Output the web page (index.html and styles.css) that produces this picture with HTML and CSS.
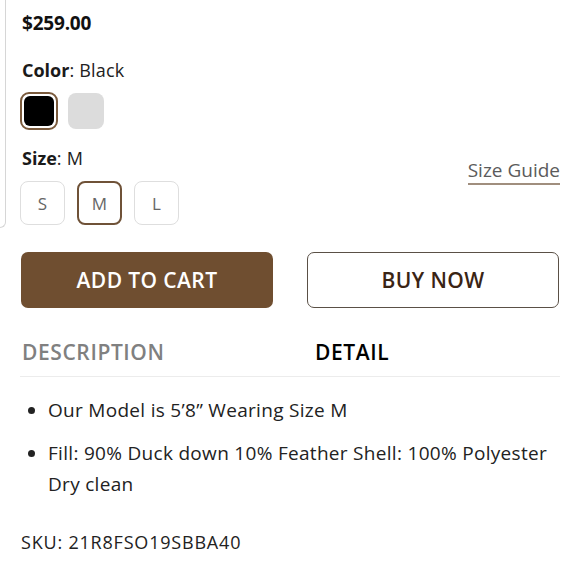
FILE: index.html
```html
<!DOCTYPE html>
<html lang="en">
<head>
<meta charset="utf-8">
<title>Product</title>
<link rel="stylesheet" href="styles.css">
</head>
<body>
<div class="top">
  <div class="rail"></div>
  <div class="details">
    <div class="price">$259.00</div>
    <div class="label"><strong>Color</strong>: Black</div>
    <div class="swatches">
      <span class="swatch swatch-black selected"><span class="fill"></span></span>
      <span class="swatch swatch-grey"></span>
    </div>
    <div class="size-row">
      <div class="size-col">
        <div class="label label-size"><strong>Size</strong>: M</div>
        <div class="sizes">
          <span class="size">S</span>
          <span class="size selected">M</span>
          <span class="size">L</span>
        </div>
      </div>
      <a class="guide" href="#">Size Guide</a>
    </div>
  </div>
</div>
<div class="actions">
  <button class="btn btn-cart">ADD TO CART</button>
  <button class="btn btn-buy">BUY NOW</button>
</div>
<div class="tabs">
  <span class="tab">DESCRIPTION</span>
  <span class="tab active">DETAIL</span>
</div>
<ul class="bullets">
  <li>Our Model is 5’8” Wearing Size M</li>
  <li>Fill: 90% Duck down 10% Feather Shell: 100% Polyester Dry clean</li>
</ul>
<div class="sku">SKU: 21R8FSO19SBBA40</div>
</body>
</html>
```
FILE: styles.css
```css
* { box-sizing: border-box; }
body {
  margin: 0;
  background: #fff;
  font-family: "Open Sans", "Lato", sans-serif;
  color: #1c1c1c;
}
.top { display: flex; }
.rail {
  width: 6px;
  height: 228px;
  border-right: 1.5px solid #d6d6d6;
  border-bottom: 1.5px solid #d6d6d6;
  border-bottom-right-radius: 8px;
}
.details {
  flex: 1;
  margin-left: 14px;
  margin-right: 20px;
}
.price {
  font-size: 19px;
  font-weight: 700;
  line-height: 46px;
  padding-left: 2px;
  letter-spacing: -0.2px;
  color: #111;
}
.label {
  margin-top: 12px;
  font-size: 18px;
  line-height: 24px;
  padding-left: 2px;
  letter-spacing: 0.2px;
  color: #222;
}
.label strong { font-weight: 700; color: #1a1a1a; letter-spacing: 0; }
.label-size { margin-top: 16px; }
.swatches {
  display: flex;
  gap: 10px;
  margin-top: 10px;
  align-items: center;
}
.swatch {
  display: block;
  width: 38px;
  height: 38px;
  border-radius: 9px;
}
.swatch-black {
  border: 2px solid #7a5a3c;
  padding: 2px;
}
.swatch-black .fill {
  display: block;
  width: 100%;
  height: 100%;
  background: #000;
  border-radius: 6px;
}
.swatch-grey {
  width: 36px;
  height: 36px;
  background: #dcdcdc;
  border-radius: 8px;
}
.size-row {
  display: flex;
  justify-content: space-between;
  align-items: flex-start;
}
.sizes {
  display: flex;
  gap: 12px;
  margin-top: 11px;
}
.size {
  width: 45px;
  height: 44px;
  border: 1.5px solid #dedede;
  border-radius: 8px;
  display: flex;
  align-items: center;
  justify-content: center;
  font-size: 17px;
  color: #666;
}
.size.selected { border: 2px solid #6f5238; }
.guide {
  margin-top: 27px;
  font-size: 19px;
  line-height: 26px;
  color: #5b5b5b;
  text-decoration: none;
  border-bottom: 2px solid #a08e7e;
  padding-bottom: 0;
}
.actions {
  display: grid;
  grid-template-columns: 1fr 1fr;
  gap: 34px;
  margin: 24px 21px 0 21px;
}
.btn {
  height: 56px;
  border-radius: 7px;
  font-family: "Open Sans", "Lato", sans-serif;
  font-size: 21px;
  font-weight: 600;
  letter-spacing: 0.4px;
  cursor: pointer;
}
.btn-cart {
  background: #6f4e30;
  border: none;
  color: #fff;
}
.btn-buy {
  background: #fff;
  border: 1.5px solid #5a5046;
  color: #3a2414;
}
.tabs {
  display: grid;
  grid-template-columns: 293px auto;
  margin: 0 20px;
  padding: 32px 0 12px 2px;
  border-bottom: 1px solid #ececec;
  font-family: "Open Sans", "Lato", sans-serif;
  font-size: 21px;
  font-weight: 600;
  letter-spacing: 0.6px;
  line-height: 24px;
}
.tab { color: #808080; }
.tab.active { color: #000; }
.bullets {
  margin: 18px 30px 0 20px;
  padding-left: 28px;
  font-size: 19px;
  line-height: 31px;
  letter-spacing: 0.3px;
  color: #222;
}
.bullets li + li { margin-top: 12px; }
.sku {
  margin: 30px 21px 0;
  font-size: 18px;
  line-height: 24px;
  letter-spacing: 0.8px;
  color: #222;
}
```
